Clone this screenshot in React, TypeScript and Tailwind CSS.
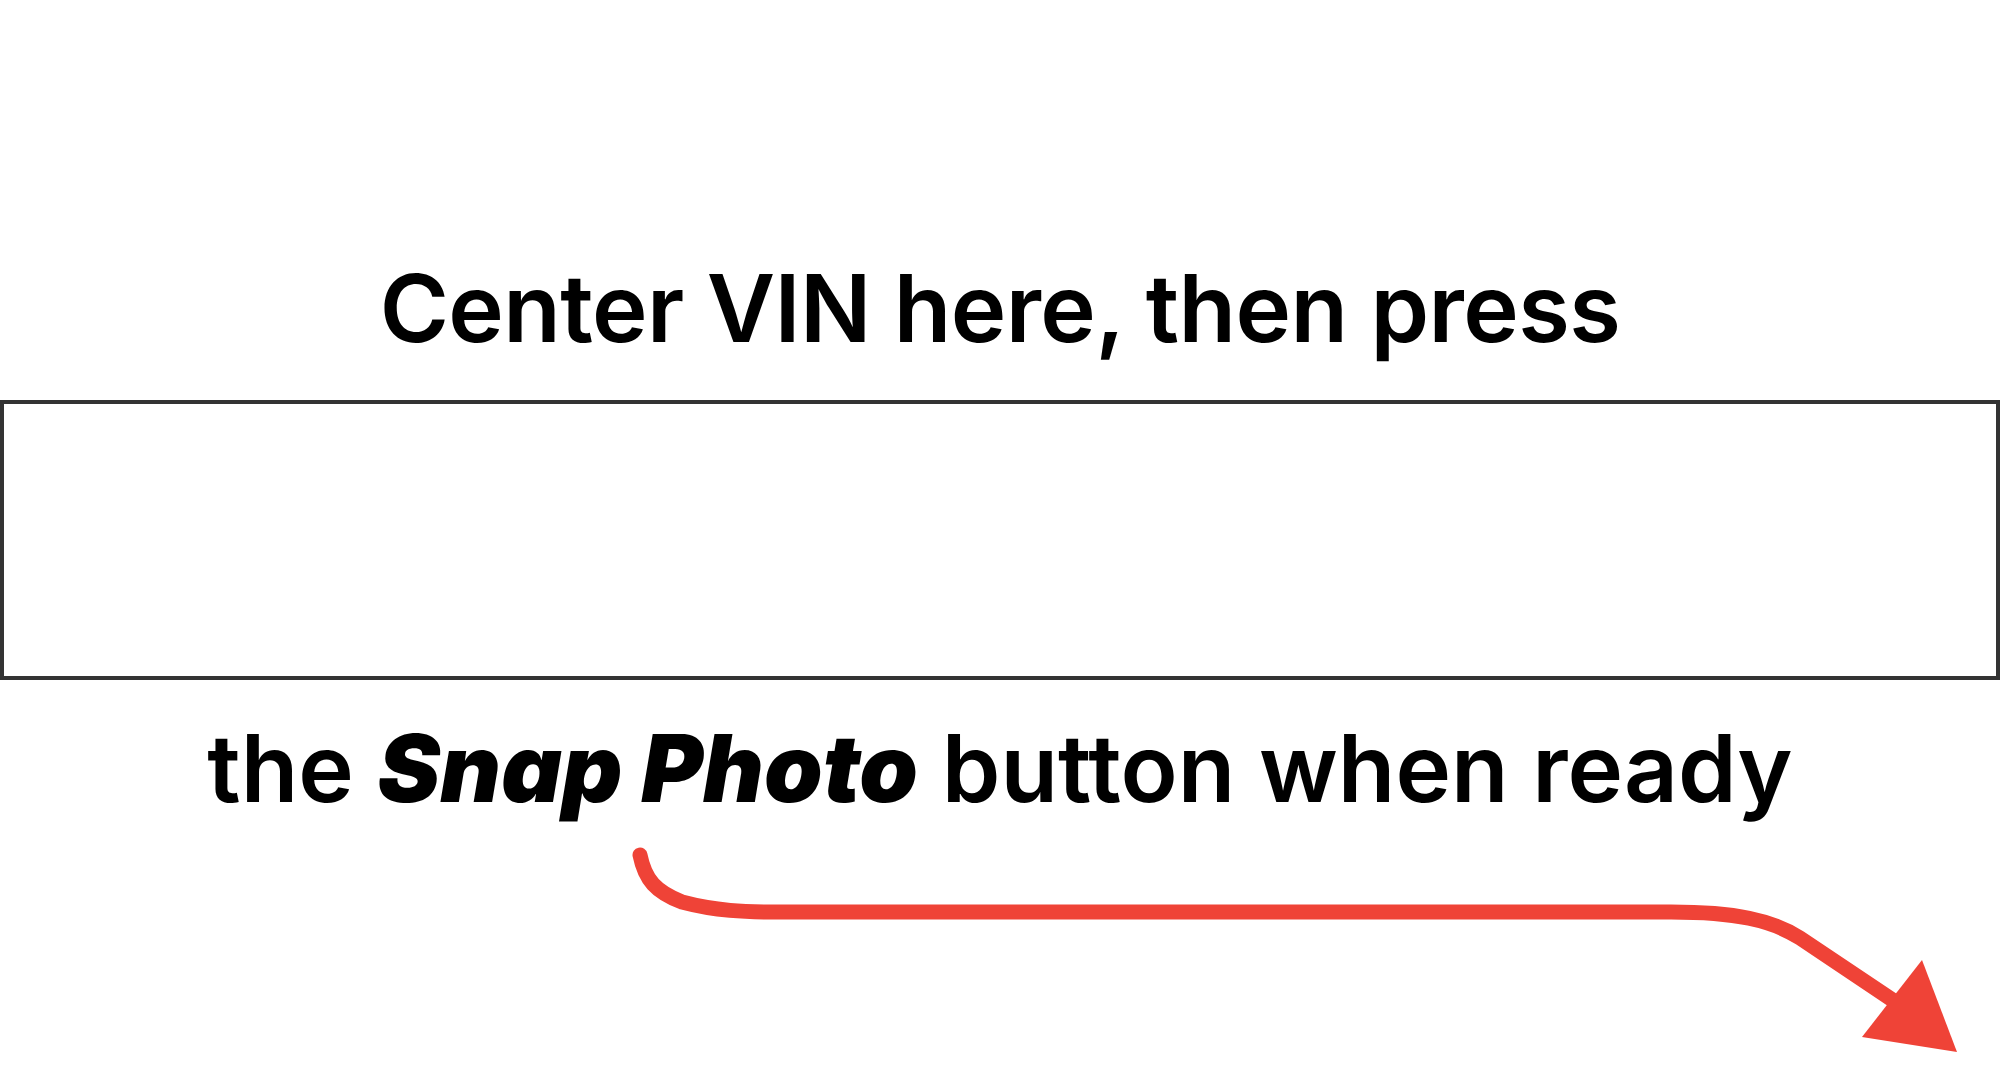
export default function App() {
  return (
    <div
      className="w-full h-[1080px] bg-white text-black flex flex-col overflow-hidden"
      style={{ fontFamily: "Inter, 'Liberation Sans', sans-serif" }}
    >
      {/* Instruction, top line */}
      <h1 className="mt-[261px] text-center text-[94px] leading-[94px] font-semibold tracking-[-0.6px]">
        Center VIN here, then press
      </h1>

      {/* VIN frame */}
      <div className="mt-[45px] h-[280px] w-full border-4 border-[#333333]"></div>

      {/* Instruction, bottom line */}
      <p className="mt-[41px] text-center text-[94px] leading-[94px] font-semibold">
        the <span className="italic font-black">Snap Photo</span> button when ready
      </p>

      {/* Arrow pointing to the button */}
      <svg className="mt-[5px] w-full h-[260px] shrink-0" viewBox="0 820 2000 260" fill="none">
        <path
          d="M640 855 C645 880 656 892 682 902 C716 911 745 912 775 912 L1671 912 C1735 912 1772 920 1800 938 L1897 1003"
          stroke="#EF4337"
          strokeWidth="15"
          strokeLinecap="round"
          strokeLinejoin="round"
        />
        <path d="M1922 960 L1957 1052 L1862 1037 Z" fill="#EF4337" />
      </svg>
    </div>
  );
}
